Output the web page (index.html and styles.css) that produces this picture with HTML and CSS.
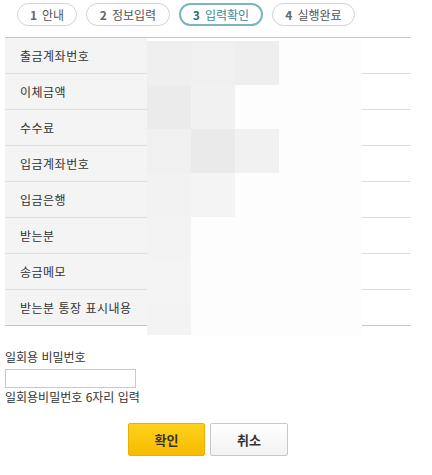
FILE: index.html
```html
<!doctype html>
<html lang="ko">
  <head>
    <meta charset="UTF-8" />
    <meta name="viewport" content="width=device-width, initial-scale=1.0" />
    <title>이체 입력확인</title>
    <link rel="stylesheet" href="styles.css">
  </head>
  <body>
    <div class="page">
      <!-- Steps -->
      <ul class="steps">
        <li class="step step-1"><b>1</b> 안내</li>
        <li class="step step-2"><b>2</b> 정보입력</li>
        <li class="step step-3 active"><b>3</b> 입력확인</li>
        <li class="step step-4"><b>4</b> 실행완료</li>
      </ul>

      <!-- Confirm table -->
      <div class="confirm">
        <table class="confirm-table">
          <tr><th>출금계좌번호</th><td></td></tr>
          <tr><th>이체금액</th><td></td></tr>
          <tr><th>수수료</th><td></td></tr>
          <tr><th>입금계좌번호</th><td></td></tr>
          <tr><th>입금은행</th><td></td></tr>
          <tr><th>받는분</th><td></td></tr>
          <tr><th>송금메모</th><td></td></tr>
          <tr><th>받는분 통장 표시내용</th><td></td></tr>
        </table>
        <!-- masked values -->
        <div class="mosaic">
          <i class="m1"></i><i class="m2"></i><i class="m3"></i><i></i><i></i>
          <i class="m4"></i><i class="m5"></i><i></i><i></i><i></i>
          <i class="m2"></i><i class="m6"></i><i class="m5"></i><i></i><i></i>
          <i class="m7"></i><i class="m8"></i><i></i><i></i><i></i>
          <i class="m9"></i><i></i><i></i><i></i><i></i>
          <i class="m8"></i><i></i><i></i><i></i><i></i>
          <i class="m9"></i><i></i><i></i><i></i><i></i>
        </div>
      </div>

      <!-- OTP -->
      <div class="otp">
        <label for="otp">일회용 비밀번호</label>
        <input type="text" id="otp" />
        <p>일회용비밀번호 6자리 입력</p>
      </div>

      <div class="button-container">
        <button class="ok">확인</button>
        <button class="cancel">취소</button>
      </div>
    </div>
  </body>
</html>
```

FILE: styles.css
```css
body {
  margin: 0;
  background: #fff;
  color: #333;
  font-family: "Noto Sans CJK KR", "Noto Sans", sans-serif;
  font-size: 12px;
}
.page {
  width: 406px;
  margin: 0 5px;
}
.steps {
  display: flex;
  gap: 9px;
  list-style: none;
  margin: 0;
  padding: 3px 0 0 12px;
  height: 37px;
  box-sizing: border-box;
}
.step {
  height: 23px;
  box-sizing: border-box;
  border: 1px solid #d2d2d2;
  border-radius: 12px;
  display: flex;
  align-items: center;
  justify-content: center;
  gap: 5px;
  color: #555;
  font-size: 12px;
  line-height: 1;
}
.step b {
  color: #666;
}
.step-1 { width: 60px; }
.step-2 { width: 84px; }
.step-3 { width: 84px; }
.step-4 { width: 83px; }
.step.active {
  border: 2px solid #7db4bf;
  color: #3f8796;
}
.step.active b {
  color: #2d6f7d;
}
.confirm {
  position: relative;
}
.confirm-table {
  width: 406px;
  border-collapse: collapse;
  border-top: 1px solid #c6c6c6;
  border-bottom: 1px solid #c6c6c6;
}
.confirm-table th,
.confirm-table td {
  height: 35px;
  padding: 0;
  border-bottom: 1px solid #dedede;
}
.confirm-table tr:last-child th,
.confirm-table tr:last-child td {
  border-bottom: 1px solid #c6c6c6;
}
.confirm-table th {
  width: 142px;
  background: #f4f4f4;
  text-align: left;
  padding-left: 15px;
  box-sizing: border-box;
  font-weight: normal;
  font-size: 12px;
  letter-spacing: 0.5px;
  color: #333;
}
.mosaic {
  position: absolute;
  left: 142px;
  top: 4px;
  width: 215px;
  height: 294px;
  display: grid;
  grid-template-columns: 44px 44px 44px 44px 39px;
  grid-template-rows: repeat(6, 44px) 30px;
}
.mosaic i {
  background: #fdfdfd;
}
.mosaic .m1 { background: #efefef; }
.mosaic .m2 { background: #f0f0f0; }
.mosaic .m3 { background: #eeeeee; }
.mosaic .m4 { background: #ebebeb; }
.mosaic .m5 { background: #f1f1f1; }
.mosaic .m6 { background: #eaeaea; }
.mosaic .m7 { background: #f2f2f2; }
.mosaic .m8 { background: #f4f4f4; }
.mosaic .m9 { background: #f3f3f3; }
.otp {
  margin-top: 23px;
}
.otp label {
  display: block;
  line-height: 16px;
}
.otp input {
  display: block;
  width: 131px;
  height: 19px;
  box-sizing: border-box;
  margin: 4px 0 0;
  border: 1px solid #c8c8c8;
}
.otp p {
  margin: 1px 0 0;
  line-height: 16px;
}
.button-container {
  display: flex;
  justify-content: center;
  gap: 5px;
  margin-top: 18px;
}
.button-container button {
  height: 33px;
  border-radius: 2px;
  font-family: inherit;
  font-size: 13px;
  font-weight: bold;
  color: #333;
  cursor: pointer;
}
.button-container .ok {
  width: 77px;
  background: linear-gradient(#fdd21c, #f6bb00);
  border: 1px solid #e8b000;
}
.button-container .cancel {
  width: 78px;
  background: linear-gradient(#fff, #f2f2f2);
  border: 1px solid #c8c8c8;
}
```
